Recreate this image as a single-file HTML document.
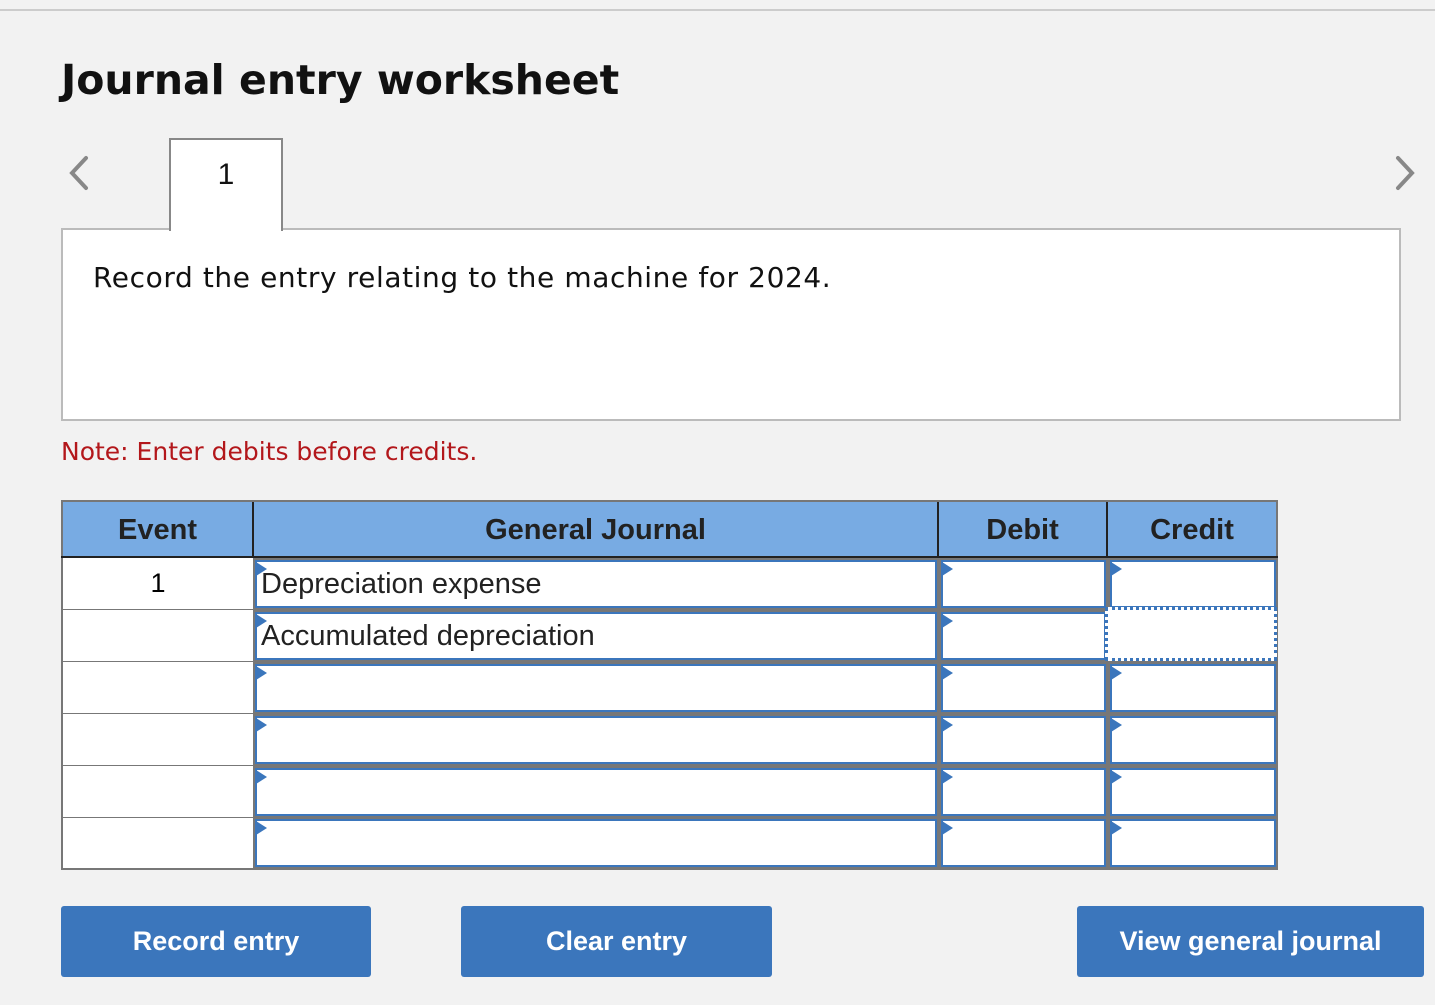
<!DOCTYPE html>
<html><head><style>
body{margin:0;width:1435px;height:1005px;background:#f2f2f2;position:relative;overflow:hidden;font-family:"Liberation Sans",Arial,sans-serif}
.a{position:absolute}
.c{position:absolute;background:#fff;box-sizing:border-box}
.h{position:absolute;background:#78abe3;font-weight:bold;font-size:29px;color:#222;display:flex;align-items:center;justify-content:center;box-sizing:border-box;border-right:2px solid #222}
.in{position:absolute;border:2px solid #3b76bc;background:#fff;box-sizing:border-box;font-size:29px;color:#222;padding-left:4px;line-height:44px}
.in:before{content:"";position:absolute;left:-1px;top:0;border-left:11px solid #3b76bc;border-top:7px solid transparent;border-bottom:7px solid transparent}
.b{position:absolute;top:906px;height:71px;background:#3b76bc;color:#fff;font-weight:bold;font-size:27px;display:flex;align-items:center;justify-content:center;border-radius:3px}
</style></head><body>
<div class="a" style="left:0;top:9px;width:1435px;height:2px;background:#ccc"></div>
<div class="a" style="left:61px;top:56px;font-family:'DejaVu Sans',Verdana,sans-serif;font-weight:bold;font-size:41px;color:#111">Journal entry worksheet</div>
<svg class="a" style="left:66px;top:154px" width="26" height="38"><path d="M20 4 L6 19 L20 34" stroke="#888" stroke-width="4" fill="none" stroke-linecap="round"/></svg>
<svg class="a" style="left:1392px;top:154px" width="26" height="38"><path d="M6 4 L20 19 L6 34" stroke="#888" stroke-width="4" fill="none" stroke-linecap="round"/></svg>
<div class="a" style="left:61px;top:228px;width:1340px;height:193px;background:#fff;border:2px solid #bbb;box-sizing:border-box"></div>
<div class="a" style="left:169px;top:138px;width:114px;height:93px;background:#fff;border:2px solid #888;border-bottom:none;box-sizing:border-box;text-align:center;font-size:30px;line-height:70px;color:#111">1</div>
<div class="a" style="left:93px;top:261px;font-family:'DejaVu Sans',Verdana,sans-serif;font-size:28px;color:#111;letter-spacing:0.6px">Record the entry relating to the machine for 2024.</div>
<div class="a" style="left:61px;top:437px;font-family:'DejaVu Sans',Verdana,sans-serif;font-size:25px;color:#b3171b">Note: Enter debits before credits.</div>
<div class="a" style="left:61px;top:500px;width:1217px;height:370px;background:#777"></div>
<div class="h" style="left:63px;top:502px;width:191px;height:56px">Event</div>
<div class="h" style="left:254px;top:502px;width:685px;height:56px">General Journal</div>
<div class="h" style="left:939px;top:502px;width:169px;height:56px">Debit</div>
<div class="h" style="left:1108px;top:502px;width:168px;height:56px;border-right:none">Credit</div>
<div class="a" style="left:61px;top:556px;width:1217px;height:2px;background:#222"></div>
<div class="c" style="left:63px;top:558px;width:190px;height:51px;font-size:27px;text-align:center;line-height:50px">1</div>
<div class="c" style="left:63px;top:610px;width:190px;height:51px"></div>
<div class="c" style="left:63px;top:662px;width:190px;height:51px"></div>
<div class="c" style="left:63px;top:714px;width:190px;height:51px"></div>
<div class="c" style="left:63px;top:766px;width:190px;height:51px"></div>
<div class="c" style="left:63px;top:818px;width:190px;height:50px"></div>

<div class="in" style="left:255px;top:560px;width:682px;height:48px">Depreciation expense</div>
<div class="in" style="left:941px;top:560px;width:165px;height:48px"></div>
<div class="in" style="left:1110px;top:560px;width:166px;height:48px"></div>
<div class="in" style="left:255px;top:612px;width:682px;height:48px">Accumulated depreciation</div>
<div class="in" style="left:941px;top:612px;width:165px;height:48px"></div>
<div class="a" style="left:1105px;top:607px;width:172px;height:54px;border:3px dotted #3b76bc;box-sizing:border-box;background:#fff"></div>

<div class="in" style="left:255px;top:664px;width:682px;height:48px"></div>
<div class="in" style="left:941px;top:664px;width:165px;height:48px"></div>
<div class="in" style="left:1110px;top:664px;width:166px;height:48px"></div>
<div class="in" style="left:255px;top:716px;width:682px;height:48px"></div>
<div class="in" style="left:941px;top:716px;width:165px;height:48px"></div>
<div class="in" style="left:1110px;top:716px;width:166px;height:48px"></div>
<div class="in" style="left:255px;top:768px;width:682px;height:48px"></div>
<div class="in" style="left:941px;top:768px;width:165px;height:48px"></div>
<div class="in" style="left:1110px;top:768px;width:166px;height:48px"></div>
<div class="in" style="left:255px;top:819px;width:682px;height:48px"></div>
<div class="in" style="left:941px;top:819px;width:165px;height:48px"></div>
<div class="in" style="left:1110px;top:819px;width:166px;height:48px"></div>

<div class="b" style="left:61px;width:310px">Record entry</div>
<div class="b" style="left:461px;width:311px">Clear entry</div>
<div class="b" style="left:1077px;width:347px">View general journal</div>
</body></html>
